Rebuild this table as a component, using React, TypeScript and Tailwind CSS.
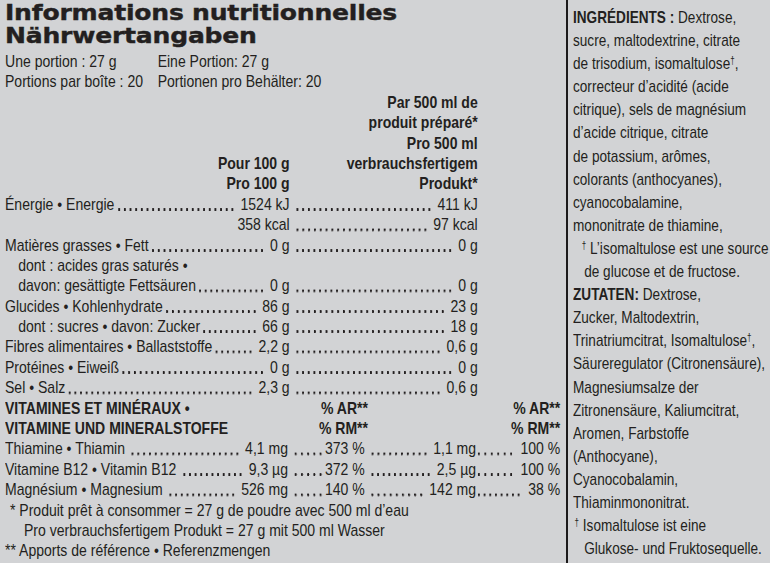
import React from "react";

// no condensed face is installed, so Liberation Sans is squeezed horizontally
const body = "font-['Liberation_Sans',Arial,sans-serif] text-[17px]";
const rowH = "h-[20.4px]";

function Dots({ left = false }: { left?: boolean }) {
	return (
		<span
			className={
				left
					? "min-w-0 flex-1 bg-[radial-gradient(circle_at_50%_14.8px,#231f20_1.15px,transparent_1.6px)] bg-[length:6.8px_20.4px] bg-left [background-repeat:space_no-repeat]"
					: "mx-[2px] min-w-0 flex-1 bg-[radial-gradient(circle_at_50%_14.8px,#231f20_1.15px,transparent_1.6px)] bg-[length:6.8px_20.4px] bg-right [background-repeat:space_no-repeat]"
			}
		/>
	);
}

interface RowProps {
	label?: string;
	v1: string;
	v2: string;
	indent?: boolean;
	noDots?: boolean;
}

function Row({ label, v1, v2, indent, noDots }: RowProps) {
	return (
		<div className={`grid ${rowH} grid-cols-[345px_228px]`}>
			<div className={indent ? "flex min-w-0 pl-[16px]" : "flex min-w-0"}>
				<span className="whitespace-nowrap">{label}</span>
				{noDots ? <span className="flex-1" /> : <Dots />}
				<span className="whitespace-nowrap pl-[4px]">{v1}</span>
			</div>
			<div className="flex min-w-0 pl-[4px]">
				<Dots />
				<span className="whitespace-nowrap pl-[4px]">{v2}</span>
			</div>
		</div>
	);
}

function VitRow({ label, a, b, c, d }: { label: string; a: string; b: string; c: string; d: string }) {
	return (
		<div className={`grid ${rowH} grid-cols-[343px_93px_135px_102px]`}>
			<div className="flex min-w-0">
				<span className="whitespace-nowrap pr-[4px]">{label}</span>
				<Dots />
				<span className="whitespace-nowrap pl-[4px]">{a}</span>
			</div>
			<div className="flex min-w-0 pl-[4px]">
				<Dots />
				<span className="whitespace-nowrap">{b}</span>
			</div>
			<div className="flex min-w-0 pl-[4px]">
				<Dots />
				<span className="whitespace-nowrap pl-[4px]">{c}</span>
			</div>
			<div className="flex min-w-0">
				<Dots left />
				<span className="whitespace-nowrap pl-[8px] text-right">{d}</span>
			</div>
		</div>
	);
}

const Dagger = () => <sup className="text-[10px]">†</sup>;

export default function App() {
	return (
		<div className="flex h-[563px] w-[770px] overflow-hidden bg-[#d2d3d5] text-[#231f20]">
			{/* Nutrition table */}
			<div className="w-[566px] shrink-0 pl-[5px]">
				<div className="origin-left scale-x-[1.14] pt-[2px] font-['DejaVu_Sans',sans-serif] text-[22px] font-bold leading-[22.5px] tracking-[-0.2px] [-webkit-text-stroke:0.4px_#231f20]">
					<div>Informations nutritionnelles</div>
					<div>Nährwertangaben</div>
				</div>

				<div className={`${body} mt-[5px] w-[690px] origin-top-left scale-x-[0.825] leading-[20.4px]`}>
					<div className={`flex ${rowH}`}>
						<span className="w-[185px]">Une portion : 27 g</span>
						<span>Eine Portion: 27 g</span>
					</div>
					<div className={`flex ${rowH}`}>
						<span className="w-[185px]">Portions par boîte : 20</span>
						<span>Portionen pro Behälter: 20</span>
					</div>

					{/* column headings */}
					<div className="grid grid-cols-[345px_228px] font-bold">
						<div className="flex flex-col justify-end text-right">
							<div className={rowH}>Pour 100 g</div>
							<div className={rowH}>Pro 100 g</div>
						</div>
						<div className="text-right">
							<div className={rowH}>Par 500 ml de</div>
							<div className={rowH}>produit préparé*</div>
							<div className={rowH}>Pro 500 ml</div>
							<div className={rowH}>verbrauchsfertigem</div>
							<div className={rowH}>Produkt*</div>
						</div>
					</div>

					<Row label="Énergie • Energie" v1="1524 kJ" v2="411 kJ" />
					<Row v1="358 kcal" v2="97 kcal" noDots />
					<Row label="Matières grasses • Fett" v1="0 g" v2="0 g" />
					<div className={`${rowH} pl-[16px]`}>dont : acides gras saturés •</div>
					<Row label="davon: gesättigte Fettsäuren" v1="0 g" v2="0 g" indent />
					<Row label="Glucides • Kohlenhydrate" v1="86 g" v2="23 g" />
					<Row label="dont : sucres • davon: Zucker" v1="66 g" v2="18 g" indent />
					<Row label="Fibres alimentaires • Ballaststoffe" v1="2,2 g" v2="0,6 g" />
					<Row label="Protéines • Eiweiß" v1="0 g" v2="0 g" />
					<Row label="Sel • Salz" v1="2,3 g" v2="0,6 g" />

					{/* vitamins */}
					<div className="grid grid-cols-[343px_97px_131px_102px] font-bold">
						<div className={rowH}>VITAMINES ET MINÉRAUX •</div>
						<div className={`${rowH} text-right`}>% AR**</div>
						<div />
						<div className={`${rowH} text-right`}>% AR**</div>
						<div className={rowH}>VITAMINE UND MINERALSTOFFE</div>
						<div className={`${rowH} text-right`}>% RM**</div>
						<div />
						<div className={`${rowH} text-right`}>% RM**</div>
					</div>
					<VitRow label="Thiamine • Thiamin" a="4,1 mg" b="373 %" c="1,1 mg" d="100 %" />
					<VitRow label="Vitamine B12 • Vitamin B12" a="9,3 µg" b="372 %" c="2,5 µg" d="100 %" />
					<VitRow label="Magnésium • Magnesium" a="526 mg" b="140 %" c="142 mg" d="38 %" />

					<div className={`${rowH} whitespace-nowrap pl-[6px]`}>* Produit prêt à consommer = 27 g de poudre avec 500 ml d’eau</div>
					<div className={`${rowH} whitespace-nowrap pl-[23px]`}>Pro verbrauchsfertigem Produkt = 27 g mit 500 ml Wasser</div>
					<div className={`${rowH} whitespace-nowrap`}>** Apports de référence • Referenzmengen</div>
				</div>
			</div>

			{/* Ingredients */}
			<div className="min-w-0 flex-1 border-l-2 border-[#1c1a1b] pl-[5px] pt-[6px]">
				<div className={`${body} w-[248px] origin-top-left scale-x-[0.8] whitespace-nowrap leading-[23.1px]`}>
					<div><span className="font-bold">INGRÉDIENTS :</span> Dextrose,</div>
					<div>sucre, maltodextrine, citrate</div>
					<div>de trisodium, isomaltulose<Dagger />,</div>
					<div>correcteur d’acidité (acide</div>
					<div>citrique), sels de magnésium</div>
					<div>d’acide citrique, citrate</div>
					<div>de potassium, arômes,</div>
					<div>colorants (anthocyanes),</div>
					<div>cyanocobalamine,</div>
					<div>mononitrate de thiamine,</div>
					<div className="pl-[11px]"><Dagger /> L’isomaltulose est une source</div>
					<div className="pl-[14px]">de glucose et de fructose.</div>
					<div><span className="font-bold">ZUTATEN:</span> Dextrose,</div>
					<div>Zucker, Maltodextrin,</div>
					<div>Trinatriumcitrat, Isomaltulose<Dagger />,</div>
					<div>Säureregulator (Citronensäure),</div>
					<div>Magnesiumsalze der</div>
					<div>Zitronensäure, Kaliumcitrat,</div>
					<div>Aromen, Farbstoffe</div>
					<div>(Anthocyane),</div>
					<div>Cyanocobalamin,</div>
					<div>Thiaminmononitrat.</div>
					<div className="pl-[2px]"><Dagger /> Isomaltulose ist eine</div>
					<div className="pl-[14px]">Glukose- und Fruktosequelle.</div>
				</div>
			</div>
		</div>
	);
}
